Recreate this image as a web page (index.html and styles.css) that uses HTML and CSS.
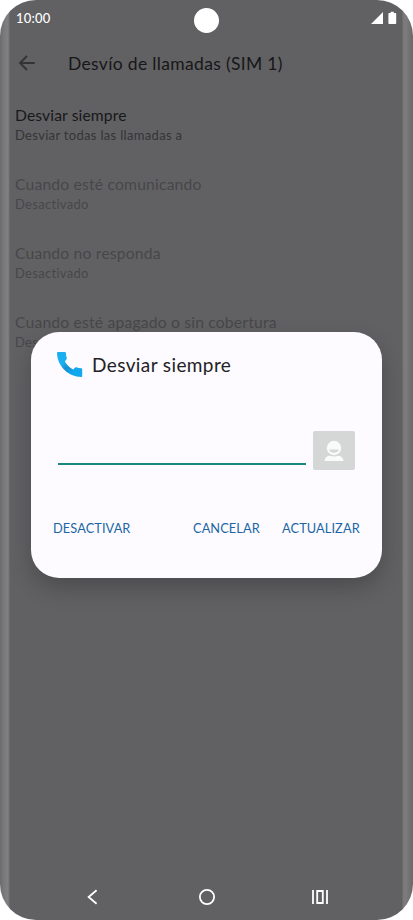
FILE: index.html
```
<!DOCTYPE html>
<html lang="es">
<head>
<meta charset="utf-8">
<title>Desvío de llamadas</title>
<link rel="stylesheet" href="styles.css">
</head>
<body>
<div class="phone">
  <header class="status">
    <span class="clock">10:00</span>
    <svg class="signals" width="26" height="14" viewBox="0 0 26 14"><path d="M0 13 12 1V13ZM19.8 0.8h3V2h1.7q.7 0 .7.7v9.5q0 .8-.8.8h-6.2q-.8 0-.8-.8V2.7q0-.7.7-.7h1.4Z" fill="#fff"/></svg>
  </header>
  <div class="camera"></div>
  <div class="toolbar">
    <svg width="18" height="18" viewBox="0 0 18 18" fill="none" stroke="#333334" stroke-width="1.9"><path d="M16.7 9H2.5M9 2 2 9l7 7"/></svg>
    <h1 class="heading">Desvío de llamadas (SIM 1)</h1>
  </div>
  <main class="list">
    <section class="item active"><div class="name">Desviar siempre</div><div class="sub">Desviar todas las llamadas a</div></section>
    <section class="item"><div class="name">Cuando esté comunicando</div><div class="sub">Desactivado</div></section>
    <section class="item"><div class="name">Cuando no responda</div><div class="sub">Desactivado</div></section>
    <section class="item"><div class="name">Cuando esté apagado o sin cobertura</div><div class="sub">Desactivado</div></section>
  </main>
  <div class="dialog" role="dialog">
    <div class="dialog-head">
      <svg width="26" height="26" viewBox="0 0 26 26"><defs><linearGradient id="g" x1="0" y1="0" x2="1" y2="1"><stop offset="0" stop-color="#19aff0"/><stop offset=".35" stop-color="#19aff0"/><stop offset=".5" stop-color="#1690cf"/><stop offset=".75" stop-color="#10a8f0"/></linearGradient></defs><path d="M.9.1h7q.9 0 1 .9.1 2.8.9 5 .2.7-.3 1.2L7.9 9.4q3 5.4 8.3 8l2-1.8q.5-.5 1.2-.3 2.1.8 4.9 1 .9.1.9.9v6.9q0 .9-.9.9C11.2 24.8.3 14.2 0 1Q0 .1.9.1Z" fill="url(#g)"/></svg>
      <h2 class="dialog-title">Desviar siempre</h2>
    </div>
    <div class="entry">
      <div class="field"></div>
      <div class="contact"><svg width="20" height="22" viewBox="0 0 20 22"><circle cx="10" cy="8" r="7.2" fill="#fafafa"/><path d="M5.2 9.4h9.6Q14 12.7 10 12.7T5.2 9.4Z" fill="#d5d7d6"/><path d="M.4 21Q1.1 16.4 5.4 15.7 10 17.3 14.6 15.7 18.9 16.4 19.6 21Z" fill="#fafafa"/></svg></div>
    </div>
    <div class="actions"><span class="b1">DESACTIVAR</span><span class="b2">CANCELAR</span><span class="b3">ACTUALIZAR</span></div>
  </div>
  <nav class="nav">
    <svg width="12" height="16" viewBox="0 0 12 16"><path d="M10.6 1.2 2.6 8l8 6.8"/></svg>
    <svg width="18" height="18" viewBox="0 0 18 18"><circle cx="9" cy="9" r="7.1"/></svg>
    <svg width="18" height="16" viewBox="0 0 18 16"><path d="M2 1v14M16 1v14M6.2 2h5.6v12H6.2Z"/></svg>
  </nav>
</div>
</body>
</html>
```
FILE: styles.css
```
* { box-sizing: border-box; }
body { margin: 0; background: #fff; font-family: Lato, "Open Sans", sans-serif; }
svg { display: block; flex: none; }
h1, h2 { margin: 0; font-weight: 400; }
.phone {
  position: relative;
  display: flex;
  flex-direction: column;
  width: 413px;
  height: 920px;
  overflow: hidden;
  border-radius: 36px;
  white-space: nowrap;
  font-variant-ligatures: none;
  background: linear-gradient(90deg, #6c6c6e 0, #7c7c7e 5px, #808082 8px, #737375 9px, #616163 10px, #616163 402px, #777779 403px, #7d7d7f 406px, #737375 409px, #696967 413px);
}
.status { display: flex; justify-content: space-between; height: 38px; padding: 11px 16px 0; color: #fff; }
.clock { font-size: 13px; line-height: 15px; font-weight: 500; letter-spacing: .2px; }
.camera { position: absolute; left: 194px; top: 8px; width: 25px; height: 25px; border-radius: 50%; background: #fff; }
.toolbar { display: flex; align-items: center; gap: 32px; height: 50px; padding-left: 18px; }
.heading { padding-top: 2px; font-size: 17.5px; line-height: 24px; letter-spacing: .33px; color: #171718; }
.list { display: flex; flex-direction: column; padding: 17px 0 0 15px; }
.item { height: 69px; color: #474749; }
.name { font-size: 15.7px; line-height: 21px; letter-spacing: .18px; }
.sub { font-size: 13px; line-height: 18px; letter-spacing: .3px; }
.active .name { letter-spacing: .1px; color: #18181a; }
.active .sub { letter-spacing: .32px; color: #343436; }
.dialog {
  position: absolute;
  left: 31px;
  top: 332px;
  width: 351px;
  height: 246px;
  border-radius: 28px;
  background: #fdfbff;
  box-shadow: 0 10px 22px rgba(0, 0, 0, .22);
}
.dialog-head { display: flex; gap: 9px; padding: 20px 0 0 26px; }
.dialog-title { font-size: 19px; line-height: 26px; letter-spacing: .4px; color: #222224; }
.entry { display: flex; gap: 7px; margin: 53px 0 0 27px; }
.field { width: 248px; height: 34px; border-bottom: 2px solid #16887d; }
.contact { display: grid; place-items: center; width: 42px; height: 39px; border-radius: 2px; background: #d5d7d6; }
.actions { display: flex; margin: 49px 0 0 22px; font-size: 12.8px; line-height: 18px; letter-spacing: .08px; color: #1b66a6; }
.b1 { width: 140px; }
.b2 { width: 89px; }
.nav { display: flex; align-items: center; justify-content: space-between; margin: auto 84px 14px 86px; height: 18px; }
.nav svg { fill: none; stroke: #fff; stroke-width: 1.8; }
.nav svg:nth-child(2) { margin-left: 4px; }
```
